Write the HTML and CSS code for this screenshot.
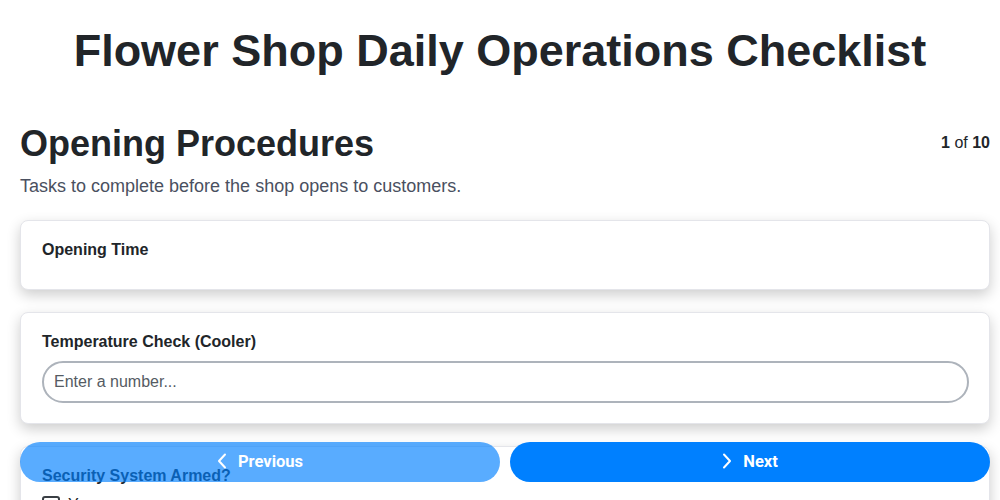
FILE: index.html
```html
<!DOCTYPE html>
<html lang="en">
<head>
<meta charset="utf-8">
<title>Flower Shop Daily Operations Checklist</title>
<link rel="stylesheet" href="styles.css">
</head>
<body>
  <h1 class="page-title">Flower Shop Daily Operations Checklist</h1>
  <main class="section">
    <div class="section-head">
      <h2 class="section-title">Opening Procedures</h2>
      <div class="progress"><b>1</b> of <b>10</b></div>
    </div>
    <p class="section-desc">Tasks to complete before the shop opens to customers.</p>

    <div class="card card-empty">
      <label class="field-label">Opening Time</label>
    </div>

    <div class="card">
      <label class="field-label" for="temp">Temperature Check (Cooler)</label>
      <input class="text-input" id="temp" type="text" placeholder="Enter a number...">
    </div>

    <div class="card">
      <label class="field-label">Security System Armed?</label>
      <label class="check-row"><span class="check-box"></span><span>Yes</span></label>
      <label class="check-row"><span class="check-box"></span><span>No</span></label>
    </div>
  </main>

  <nav class="footer-nav">
    <button class="nav-btn nav-prev" type="button">
      <svg width="10" height="16" viewBox="0 0 10 16" aria-hidden="true"><path d="M8 1.5 L2 8 L8 14.5" fill="none" stroke="#fff" stroke-width="2" stroke-linecap="round" stroke-linejoin="round"/></svg>
      <span>Previous</span>
    </button>
    <button class="nav-btn nav-next" type="button">
      <svg width="10" height="16" viewBox="0 0 10 16" aria-hidden="true"><path d="M2 1.5 L8 8 L2 14.5" fill="none" stroke="#fff" stroke-width="2" stroke-linecap="round" stroke-linejoin="round"/></svg>
      <span>Next</span>
    </button>
  </nav>
</body>
</html>
```

FILE: styles.css
```css
* { box-sizing: border-box; }

body {
  margin: 0;
  font-family: "Liberation Sans", Arial, sans-serif;
  color: #212529;
  background: #fff;
}

.page-title {
  margin: 24px 0 0;
  font-size: 45px;
  line-height: 54px;
  font-weight: 700;
  text-align: center;
  color: #212529;
}

.section {
  margin: 44px 10px 0 20px;
}

.section-head {
  display: flex;
  align-items: center;
  justify-content: space-between;
}

.section-title {
  margin: 0;
  font-size: 36px;
  line-height: 43px;
  font-weight: 700;
}

.progress {
  font-size: 16px;
  line-height: 18px;
  color: #212529;
  margin-bottom: 2px;
}

.section-desc {
  margin: 10px 0 23px;
  font-size: 18px;
  line-height: 22px;
  color: #4a5060;
}

.card {
  border: 1px solid #e4e5ea;
  border-radius: 8px;
  padding: 20px 20px 20px 21px;
  margin-bottom: 22px;
  background: #fff;
  box-shadow: 0 5px 14px rgba(0, 0, 0, 0.2);
}

.card-empty { padding-bottom: 20px; }

.field-label {
  display: block;
  font-size: 16px;
  line-height: 18px;
  font-weight: 700;
  color: #212529;
  margin-bottom: 10px;
}

.text-input {
  display: block;
  width: 100%;
  height: 42px;
  border: 2px solid #adb3bb;
  border-radius: 21px;
  padding: 0 10px;
  font-family: "Liberation Sans", Arial, sans-serif;
  font-size: 16px;
  color: #212529;
  background: #fff;
  outline: none;
}

.text-input::placeholder { color: #555b63; }

.check-row {
  display: flex;
  align-items: center;
  gap: 8px;
  font-size: 16px;
  line-height: 20px;
  margin-bottom: 8px;
}

.check-box {
  width: 18px;
  height: 18px;
  border: 2px solid #3a3f45;
  border-radius: 3px;
  background: #fff;
}

.footer-nav {
  position: fixed;
  left: 0;
  right: 0;
  bottom: 18px;
  display: flex;
  gap: 10px;
  padding: 0 10px 0 20px;
}

.nav-btn {
  flex: 1;
  height: 40px;
  border: none;
  border-radius: 20px;
  background: #0080ff;
  color: #fff;
  font-family: Roboto, "Liberation Sans", sans-serif;
  font-size: 16.5px;
  font-weight: 700;
  display: flex;
  align-items: center;
  justify-content: center;
  gap: 11px;
  padding: 0 0 2px;
}

.nav-prev { opacity: 0.65; }
```
